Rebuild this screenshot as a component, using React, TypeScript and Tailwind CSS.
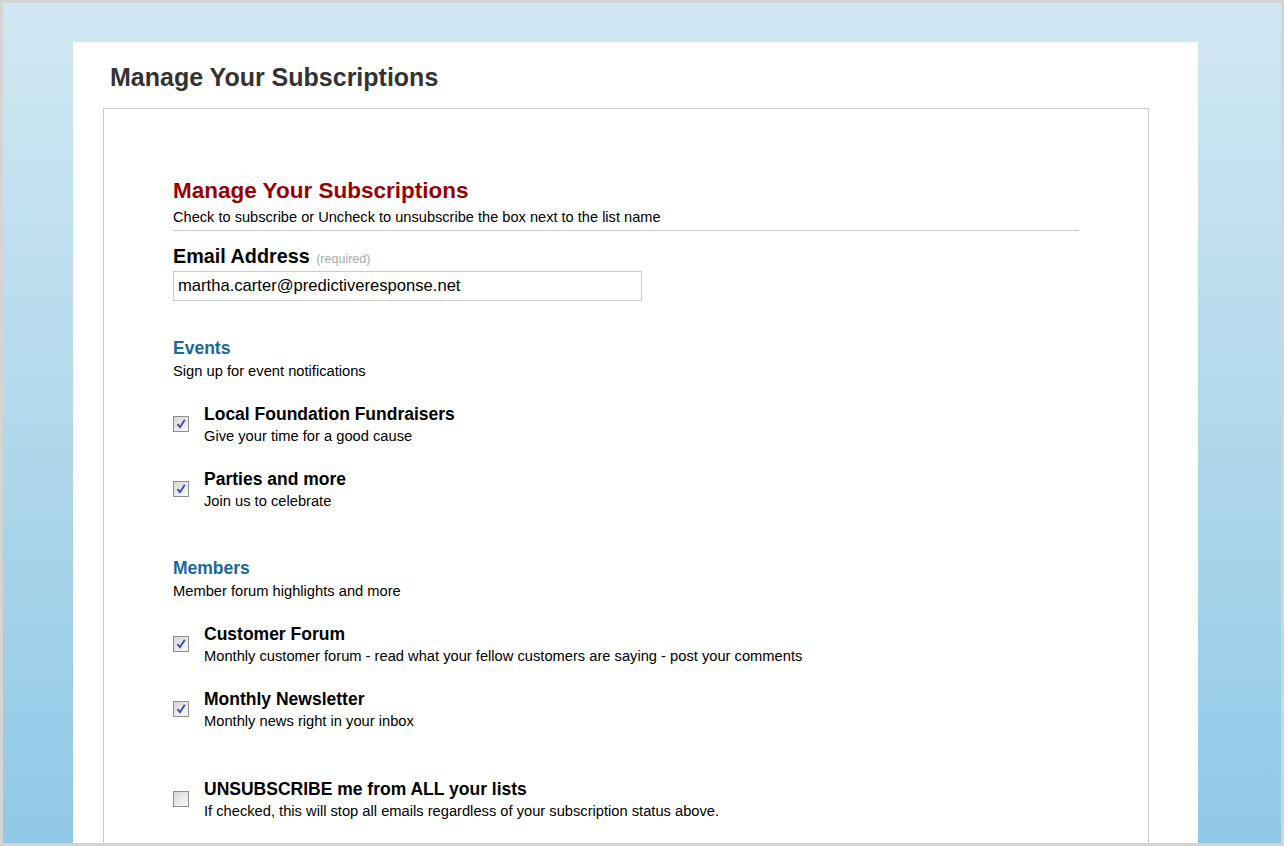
import React, { useState } from 'react';

type Item = { id: string; title: string; desc: string };

const groups: { name: string; desc: string; items: Item[] }[] = [
  {
    name: 'Events',
    desc: 'Sign up for event notifications',
    items: [
      { id: 'fundraisers', title: 'Local Foundation Fundraisers', desc: 'Give your time for a good cause' },
      { id: 'parties', title: 'Parties and more', desc: 'Join us to celebrate' },
    ],
  },
  {
    name: 'Members',
    desc: 'Member forum highlights and more',
    items: [
      {
        id: 'forum',
        title: 'Customer Forum',
        desc: 'Monthly customer forum - read what your fellow customers are saying - post your comments',
      },
      { id: 'newsletter', title: 'Monthly Newsletter', desc: 'Monthly news right in your inbox' },
    ],
  },
];

function Checkbox({ checked, onChange }: { checked: boolean; onChange: () => void }) {
  return (
    <button
      type="button"
      onClick={onChange}
      className="w-[16px] h-[16px] shrink-0 border border-[#8e8f8f] bg-gradient-to-br from-[#d3d6dc] to-[#fbfbfb] flex items-center justify-center p-0"
    >
      {checked && (
        <svg width="12" height="12" viewBox="0 0 12 12">
          <path d="M2.5 6.2 L5 9.2 L9.8 1.8" fill="none" stroke="#3f4f9c" strokeWidth="1.9" />
        </svg>
      )}
    </button>
  );
}

function Row({ title, desc, checked, onChange }: { title: string; desc: string; checked: boolean; onChange: () => void }) {
  return (
    <div className="flex items-center gap-[15px]">
      <Checkbox checked={checked} onChange={onChange} />
      <div>
        <div className="text-[17.5px] leading-[20px] font-bold text-black">{title}</div>
        <div className="mt-[4px] text-[14.7px] leading-[16px] text-black">{desc}</div>
      </div>
    </div>
  );
}

export default function App() {
  const [checked, setChecked] = useState<Record<string, boolean>>({
    fundraisers: true,
    parties: true,
    forum: true,
    newsletter: true,
    unsubscribe: false,
  });
  const [email, setEmail] = useState('martha.carter@predictiveresponse.net');

  const toggle = (id: string) => setChecked((c) => ({ ...c, [id]: !c[id] }));

  return (
    <div
      className="h-[846px] overflow-hidden border-[3px] border-[#d4d4d4] bg-gradient-to-b from-[#d1e8f3] to-[#90c9e5] pt-[39px] pl-[70px]"
      style={{ fontFamily: '"Liberation Sans", Arial, sans-serif' }}
    >
      <div className="w-[1125px] min-h-[900px] bg-white">
        <h1 className="pl-[37px] pt-[21px] text-[25px] leading-[28px] font-bold text-[#333333]">
          Manage Your Subscriptions
        </h1>

        <div className="ml-[30px] mt-[17px] w-[1046px] border border-[#cccccc] px-[69px] pt-[69px] pb-[40px]">
          <h2 className="text-[22.5px] leading-[26px] font-bold text-[#990000]">Manage Your Subscriptions</h2>
          <p className="mt-[5px] pb-[5px] border-b border-[#cccccc] text-[14.6px] leading-[16px] text-black">
            Check to subscribe or Uncheck to unsubscribe the box next to the list name
          </p>

          <label className="block mt-[14px] text-[19.8px] leading-[22px] font-bold text-black">
            Email Address{' '}
            <span className="ml-[1px] text-[12.5px] leading-none font-normal text-[#aaaaaa]">(required)</span>
          </label>
          <input
            type="text"
            value={email}
            onChange={(e) => setEmail(e.target.value)}
            className="block mt-[4px] w-[469px] h-[30px] border border-[#cccccc] px-[4px] text-[16.6px] text-black outline-none"
          />

          {groups.map((g, gi) => (
            <div key={g.name} className={gi === 0 ? 'mt-[37px]' : 'mt-[49px]'}>
              <h3 className="text-[17.5px] leading-[20px] font-bold text-[#1a699b]">{g.name}</h3>
              <p className="mt-[5px] text-[14.7px] leading-[16px] text-black">{g.desc}</p>
              <div className="mt-[25px] flex flex-col gap-[25px]">
                {g.items.map((it) => (
                  <Row
                    key={it.id}
                    title={it.title}
                    desc={it.desc}
                    checked={checked[it.id]}
                    onChange={() => toggle(it.id)}
                  />
                ))}
              </div>
            </div>
          ))}

          <div className="mt-[50px]">
            <Row
              title="UNSUBSCRIBE me from ALL your lists"
              desc="If checked, this will stop all emails regardless of your subscription status above."
              checked={checked.unsubscribe}
              onChange={() => toggle('unsubscribe')}
            />
          </div>
        </div>
      </div>
    </div>
  );
}
